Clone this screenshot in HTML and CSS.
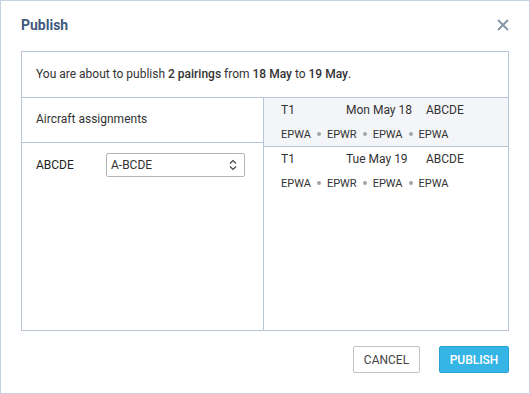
FILE: index.html
```html
<!DOCTYPE html>
<html lang="en">
<head>
    <meta charset="UTF-8">
    <title>Publish</title>
    <link rel="stylesheet" href="styles.css">
</head>
<body>

    <!-- Dialog -->
    <div class="dialog">
        <div class="dialog-header">
            <h2>Publish</h2>
            <button class="close-btn" aria-label="Close">
                <svg width="12" height="12" viewBox="0 0 12 12">
                    <path d="M1 1 L11 11 M11 1 L1 11" stroke="#8796a8" stroke-width="2" fill="none"/>
                </svg>
            </button>
        </div>

        <div class="panel">
            <div class="message">
                You are about to publish <b>2 pairings</b> from <b>18 May</b> to <b>19 May</b>.
            </div>

            <div class="split">
                <!-- Assignments -->
                <div class="assignments">
                    <div class="assignments-title">Aircraft assignments</div>
                    <div class="assign-row">
                        <span class="reg">ABCDE</span>
                        <div class="select">
                            <span>A-BCDE</span>
                            <svg width="8" height="12" viewBox="0 0 8 12">
                                <path d="M1 4.5 L4 1.5 L7 4.5 M1 7.5 L4 10.5 L7 7.5" stroke="#444" stroke-width="1.2" fill="none"/>
                            </svg>
                        </div>
                    </div>
                </div>

                <!-- Pairings -->
                <div class="pairings">
                    <div class="pairing active">
                        <div class="pairing-top">
                            <span class="p-name">T1</span>
                            <span class="p-date">Mon May 18</span>
                            <span class="p-reg">ABCDE</span>
                        </div>
                        <div class="route">
                            EPWA <i class="dot"></i> EPWR <i class="dot"></i> EPWA <i class="dot"></i> EPWA
                        </div>
                    </div>
                    <div class="pairing">
                        <div class="pairing-top">
                            <span class="p-name">T1</span>
                            <span class="p-date">Tue May 19</span>
                            <span class="p-reg">ABCDE</span>
                        </div>
                        <div class="route">
                            EPWA <i class="dot"></i> EPWR <i class="dot"></i> EPWA <i class="dot"></i> EPWA
                        </div>
                    </div>
                </div>
            </div>
        </div>

        <div class="dialog-footer">
            <button class="btn btn-cancel">CANCEL</button>
            <button class="btn btn-publish">PUBLISH</button>
        </div>
    </div>

</body>
</html>
```

FILE: styles.css
```css
/* General */
body {
    margin: 0;
    font-family: 'Roboto', sans-serif;
    color: #333;
    background: #fff;
}

/* Dialog frame */
.dialog {
    width: 528px;
    height: 392px;
    border: 1px solid #c5d1e0;
    display: flex;
    flex-direction: column;
    background: #fff;
}

.dialog-header {
    display: flex;
    align-items: center;
    justify-content: space-between;
    height: 50px;
    padding: 0 19px 0 20px;
}

.dialog-header h2 {
    margin: 0;
    font-size: 14px;
    font-weight: bold;
    color: #3e5a7d;
    padding-bottom: 3px;
}

.close-btn {
    border: none;
    background: none;
    padding: 0 0 3px 0;
    width: 14px;
    height: 17px;
    display: flex;
    align-items: center;
    justify-content: center;
    cursor: pointer;
}

/* Main panel */
.panel {
    margin: 0 20px;
    border: 1px solid #b9c5d6;
    height: 278px;
    display: flex;
    flex-direction: column;
}

.message {
    height: 45px;
    line-height: 44px;
    padding-left: 14px;
    font-size: 12px;
    border-bottom: 1px solid #b9c5d6;
}

.message b {
    font-weight: 500;
}

.split {
    flex: 1;
    display: flex;
}

/* Left side */
.assignments {
    width: 241px;
    border-right: 1px solid #b9c5d6;
}

.assignments-title {
    height: 44px;
    line-height: 43px;
    padding-left: 14px;
    font-size: 12px;
    border-bottom: 1px solid #b9c5d6;
}

.assign-row {
    display: flex;
    align-items: center;
    padding: 10px 0 0 14px;
    font-size: 12px;
}

.reg {
    width: 70px;
    color: #222;
}

.select {
    box-sizing: border-box;
    width: 139px;
    height: 24px;
    border: 1px solid #b5b5b5;
    border-radius: 2px;
    display: flex;
    align-items: center;
    justify-content: space-between;
    padding: 0 7px 0 4px;
}

/* Right side */
.pairings {
    flex: 1;
}

.pairing {
    height: 48px;
    border-bottom: 1px solid #b9c5d6;
    padding-left: 17px;
    font-size: 12px;
}

.pairing:last-child {
    border-bottom: none;
}

.pairing.active {
    background: #f3f5f8;
}

.pairing-top {
    display: flex;
    height: 24px;
    align-items: center;
}

.p-name {
    width: 65px;
}

.p-date {
    width: 80px;
}

.route {
    height: 24px;
    display: flex;
    align-items: center;
    font-size: 11px;
    gap: 6px;
}

.dot {
    width: 4px;
    height: 4px;
    border-radius: 50%;
    background: #a5a5a5;
    display: inline-block;
}

/* Footer */
.dialog-footer {
    flex: 1;
    display: flex;
    justify-content: flex-end;
    align-items: flex-start;
    padding: 15px 20px 0 0;
    gap: 19px;
}

.btn {
    box-sizing: border-box;
    height: 27px;
    font-family: 'Roboto', sans-serif;
    font-size: 12px;
    border-radius: 2px;
    cursor: pointer;
    padding: 0;
}

.btn-cancel {
    width: 67px;
    background: #fff;
    border: 1px solid #c2c2c2;
    color: #444;
}

.btn-publish {
    width: 70px;
    background: #35b5e6;
    border: 1px solid #2aa3d6;
    color: #fff;
    font-weight: 500;
}
```
